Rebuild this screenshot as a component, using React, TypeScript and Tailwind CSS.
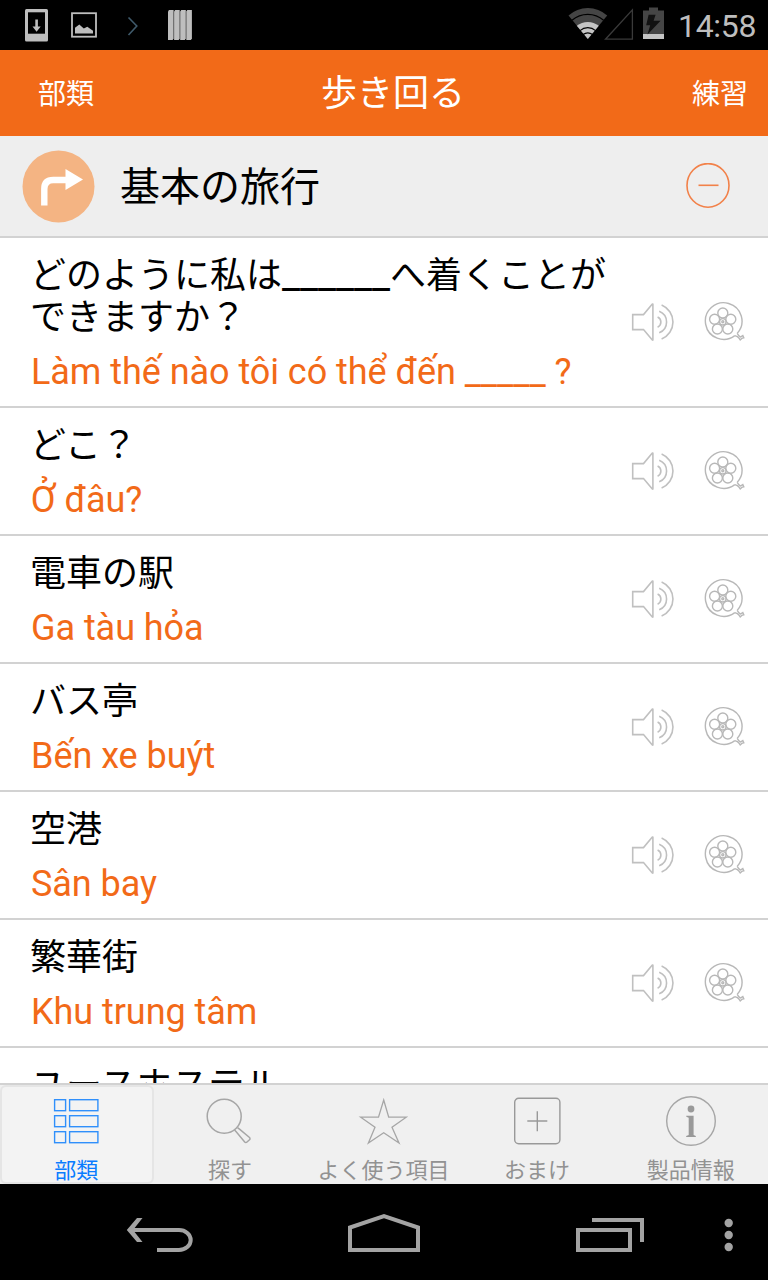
import { ReactNode } from "react";

type Phrase = {
    id: string;
    title: ReactNode;
    translation: string;
};

const PHRASES: Phrase[] = [
    {
        id: "how-to-get",
        title: (
            <>
                どのように私は
                <span className="font-['Roboto'] text-[40px] leading-[30px] tracking-[-0.06px]">______</span>
                へ着くことが
                <br />
                できますか？
            </>
        ),
        translation: "Làm thế nào tôi có thể đến _____ ?",
    },
    { id: "where", title: "どこ？", translation: "Ở đâu?" },
    { id: "train", title: "電車の駅", translation: "Ga tàu hỏa" },
    { id: "bus", title: "バス亭", translation: "Bến xe buýt" },
    { id: "airport", title: "空港", translation: "Sân bay" },
    { id: "downtown", title: "繁華街", translation: "Khu trung tâm" },
];

const TABS = [
    { label: "部類", icon: <ListIcon />, active: true },
    { label: "探す", icon: <SearchIcon />, active: false },
    { label: "よく使う項目", icon: <StarIcon />, active: false },
    { label: "おまけ", icon: <PlusIcon />, active: false },
    { label: "製品情報", icon: <InfoIcon />, active: false },
];

function ListIcon() {
    return (
        <svg className="shrink-0" width="52" height="52" viewBox="0 0 52 52" fill="none" stroke="#2f8ffb" strokeWidth="1.4">
            {[5, 21, 37].map((y) => (
                <g key={y}>
                    <rect x="3.6" y={y - 0.3} width="11" height="11" />
                    <rect x="18.6" y={y - 0.3} width="28.3" height="11" />
                </g>
            ))}
        </svg>
    );
}

function SearchIcon() {
    return (
        <svg className="shrink-0" width="52" height="52" viewBox="0 0 52 52" fill="none" stroke="#a6a6a6" strokeWidth="1.5">
            <circle cx="20.2" cy="21.2" r="17" />
            <path d="M30.6 35l1.8 2 8.3 10a1.6 1.6 0 0 0 2.3 0l2.5-2.2a1.6 1.6 0 0 0 0-2.3l-10-8.3-2-1.6" />
        </svg>
    );
}

function StarIcon() {
    return (
        <svg className="shrink-0" width="52" height="52" viewBox="0 0 52 52" fill="none" stroke="#a6a6a6" strokeWidth="1.3">
            <path d="M25.7 5l5 17.2h17.5L34 32.2 41 48 25.7 37.7 10.4 48 17 32.2 2.7 22.2h17.8z" />
        </svg>
    );
}

function PlusIcon() {
    return (
        <svg className="shrink-0" width="52" height="52" viewBox="0 0 52 52" fill="none" stroke="#999" strokeWidth="1.4">
            <rect x="2.7" y="3.3" width="45.2" height="45.4" rx="4" />
            <path d="M25.3 16.2v20M15.3 26h20" />
        </svg>
    );
}

function InfoIcon() {
    return (
        <svg className="shrink-0" width="52" height="52" viewBox="0 0 52 52">
            <circle cx="26" cy="26" r="24.3" fill="none" stroke="#a6a6a6" strokeWidth="1.4" />
            <circle cx="26" cy="14" r="3.4" fill="#999" />
            <path d="M21.3 20.7h7.3v19.2l2.2 1.1v.9h-9.6V41l2.5-1.1V22.8l-2.4-1z" fill="#999" />
        </svg>
    );
}

function SpeakerIcon() {
    return (
        <svg width="44" height="44" viewBox="0 0 44 44" fill="none" stroke="#c0c0c0" strokeWidth="1.6">
            <path d="M2.7 14.6h10.8l8.2-9.8q1.2-1.4 1.2-.4v35.4q0 .8-1.2-.6l-8.2-9.6h-10.8z" />
            <path d="M27.6 17a5.6 5.6 0 0 1 0 10.2M29.2 11.2a11.6 11.6 0 0 1 0 21.6M31.6 5a18.4 18.4 0 0 1 0 34" />
        </svg>
    );
}

function ReelIcon() {
    return (
        <svg width="44" height="44" viewBox="0 0 44 44" fill="none" stroke="#b8b8b8" strokeWidth="1.4">
            <path d="M35.2 33.4A18.3 18.3 0 1 0 32.8 35.6" />
            <circle cx="20.8" cy="13" r="5" />
            <circle cx="28.8" cy="19.2" r="5" />
            <circle cx="25.8" cy="29" r="5" />
            <circle cx="15.4" cy="29" r="5" />
            <circle cx="12.6" cy="19.2" r="5" />
            <circle cx="20.8" cy="21.8" r="3.2" />
            <circle cx="20.8" cy="21.8" r="1" />
            <path d="M32.8 35.6q3 .6 4.4 2.8l1 1.6 1.6-1.6 2-.6-1-2.2-2.4 1.4q-1.4-.4-3.2-3.6" />
        </svg>
    );
}

function StatusBar() {
    return (
        <div className="flex h-[50px] shrink-0 items-center justify-between bg-black">
            <svg width="200" height="50" viewBox="0 0 200 50">
                <rect x="25" y="9" width="23" height="32.5" rx="1.5" fill="#bebebe" />
                <rect x="28" y="12.3" width="17" height="21.4" fill="#000" />
                <path d="M35.3 19.5h2.6v7h2.8l-4.1 5.3-4.1-5.3h2.8z" fill="#bebebe" />
                <rect x="72" y="13.2" width="24" height="23.5" fill="none" stroke="#bebebe" strokeWidth="1.8" />
                <path d="M75 33.5v-5.7l4.3-3.3 4.5 4 3.5-1.8 5.7 4v2.8z" fill="#bebebe" />
                <path d="M128.5 17.5l8.3 8.5-8.3 9" fill="none" stroke="#3f5a6b" strokeWidth="1.6" />
                {[168, 174.1, 180.2, 186.3].map((x) => (
                    <path key={x} d={`M${x} 11.5l1-1.5h4.6v28.5l-1 1.5h-4.6z`} fill="#bebebe" />
                ))}
            </svg>
            <div className="flex items-center pr-[12px]">
                <svg width="120" height="50" viewBox="0 0 120 50">
                    <path d="M10.5 15.5a29 29 0 0 1 38.7 0L29.9 39z" fill="#454545" />
                    <path d="M18.8 25.8a17.5 17.5 0 0 1 22 0L29.8 39z" fill="#c4c4c4" />
                    <path
                        d="M14 20.3a24 24 0 0 1 31.6 0M22 30.6a12 12 0 0 1 15.6 0M25 34.6a8 8 0 0 1 9.6 0"
                        fill="none"
                        stroke="#000"
                        strokeWidth="1.2"
                    />
                    <path d="M47.5 39.2h26.9V9.8z" fill="none" stroke="#3a3a3a" strokeWidth="1.3" />
                    <path d="M85 10.5h6V7.5h9v3h6V39H85z" fill="#454545" />
                    <rect x="85" y="34" width="21" height="5" fill="#c4c4c4" />
                    <path d="M90.6 14.8h7l-2 6h7L89.5 34.5l2.7-9.3h-4z" fill="#111" />
                </svg>
                <span className="w-[78px] pt-[2px] whitespace-nowrap font-['Roboto'] text-[32px] leading-[48px] tracking-[-0.3px] text-[#bebebe]">
                    14:58
                </span>
            </div>
        </div>
    );
}

function Header() {
    return (
        <div className="flex h-[86px] shrink-0 items-center justify-between bg-[#f26a18] pr-[20px] pb-[3px] pl-[38px] text-white">
            <p className="text-[28px]">部類</p>
            <p className="pb-[3px] text-[36px]">歩き回る</p>
            <p className="text-[28px]">練習</p>
        </div>
    );
}

function SectionHeader() {
    return (
        <div className="flex h-[102px] shrink-0 items-center border-b-2 border-[#d2d2d2] bg-[#eee] pr-[38px] pl-[22px]">
            <svg width="74" height="74" viewBox="0 0 74 74">
                <circle cx="36.5" cy="37.4" r="36" fill="#f4b483" />
                <path d="M22.3 56.5V40q0-9 9-9H45" fill="none" stroke="#fff" strokeWidth="6.4" />
                <path d="M43.5 20L61 30.6 43.5 41z" fill="#fff" />
            </svg>
            <p className="ml-[24px] flex-1 pb-[5px] text-[40px] leading-[48px]">基本の旅行</p>
            <svg width="44" height="46" viewBox="0 0 44 46" fill="none" stroke="#f28149" strokeWidth="1.6">
                <ellipse cx="22" cy="22.4" rx="21" ry="21.8" />
                <path d="M12.5 22.3h20" />
            </svg>
        </div>
    );
}

function renderPhrase(item: Phrase) {
    return (
        <div
            key={item.id}
            className="flex shrink-0 items-center justify-between border-b-2 border-[#d2d2d2] pr-[22px] pl-[30px]"
        >
            <div className="pt-[13px] pb-[13px] whitespace-nowrap">
                <p className="text-[36px] leading-[42px]">{item.title}</p>
                <p className="mt-[16px] pl-px font-['Roboto'] text-[36px] leading-[42px] tracking-[-0.05px] text-[#f26a18]">
                    {item.translation}
                </p>
            </div>
            <div className="flex gap-[28px]">
                <SpeakerIcon />
                <ReelIcon />
            </div>
        </div>
    );
}

function TabBar() {
    return (
        <div className="flex h-[101px] shrink-0 border-t-2 border-[#d2d2d2] bg-[#f0f0f0]">
            {TABS.map(({ label, icon, active }) => (
                <div
                    key={label}
                    className={
                        active
                            ? "flex w-1/5 flex-col items-center rounded-md border-2 border-[#e5e5e5] bg-[#f3f3f3] pt-[8px] text-[#0a7cff]"
                            : "flex w-1/5 flex-col items-center pt-[10px] text-[#929292]"
                    }
                >
                    {icon}
                    <p className="mt-[6px] mr-px text-[22px] leading-[30px] whitespace-nowrap">{label}</p>
                </div>
            ))}
        </div>
    );
}

function NavigationBar() {
    return (
        <div className="h-[96px] shrink-0 bg-black">
            <svg width="768" height="96" viewBox="0 0 768 96" fill="none" stroke="#a3a3a3" strokeWidth="4">
                <path d="M130 46h49a11.7 10 0 0 1 0 20h-22" />
                <path d="M137 34h5.5L133 46l9.5 12H137L126.8 46z" fill="#a3a3a3" stroke="none" />
                <path d="M350 66V43.5L384 32l34 11.5V66z" />
                <path d="M578 46h52v20h-52zM592 36h50v22" />
                <g fill="#a3a3a3" stroke="none">
                    <circle cx="728.7" cy="39" r="4.2" />
                    <circle cx="728.7" cy="51" r="4.2" />
                    <circle cx="728.7" cy="63" r="4.2" />
                </g>
            </svg>
        </div>
    );
}

export default function App() {
    return (
        <div className="flex h-[1280px] w-[768px] flex-col overflow-hidden bg-white font-['Noto_Sans_CJK_JP',sans-serif] text-black">
            <StatusBar />
            <Header />
            <SectionHeader />
            <div className="flex min-h-0 flex-1 flex-col overflow-hidden">
                {PHRASES.map((item) => renderPhrase(item))}
                <p className="shrink-0 pt-[13px] pl-[30px] text-[36px] leading-[42px]">ユースホステル</p>
            </div>
            <TabBar />
            <NavigationBar />
        </div>
    );
}
